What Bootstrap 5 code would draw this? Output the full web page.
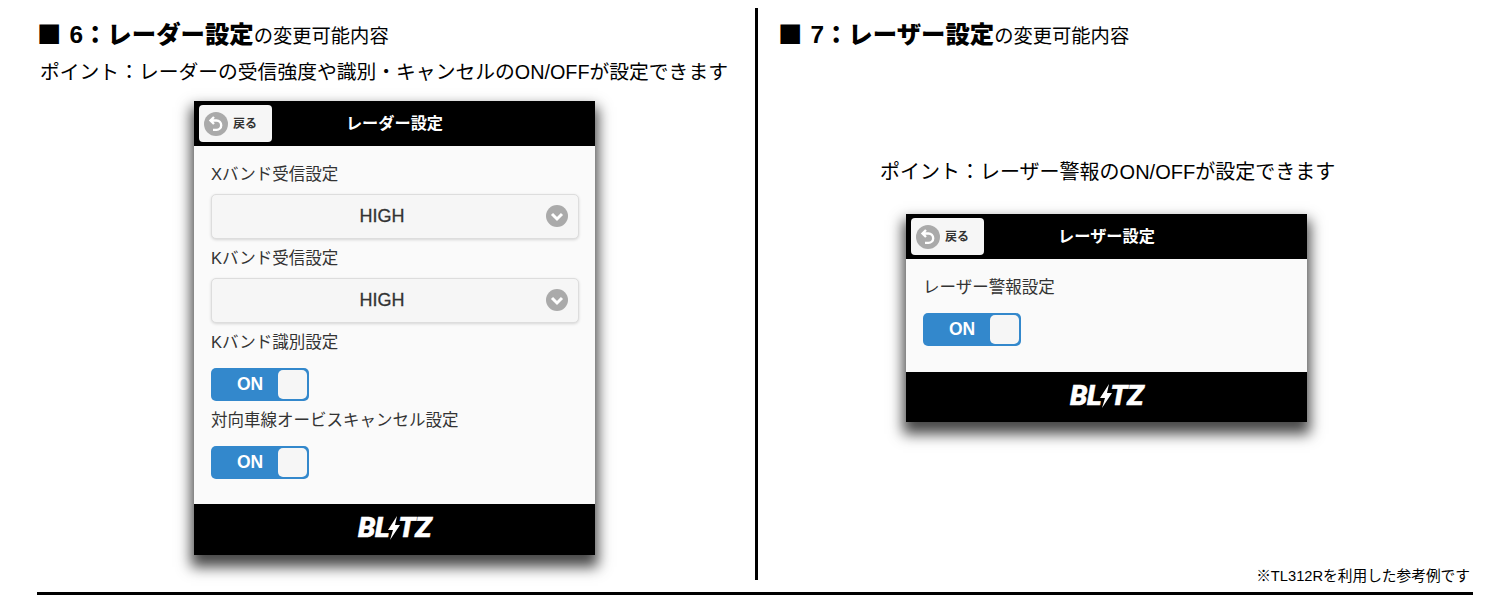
<!DOCTYPE html>
<html lang="ja">
<head>
    <meta charset="UTF-8">
    <title>レーダー設定 / レーザー設定</title>
    <link href="https://cdn.jsdelivr.net/npm/bootstrap@5.3.3/dist/css/bootstrap.min.css" rel="stylesheet">
    <style>
        body {
            background: #fff;
            color: #000;
            font-family: "Liberation Sans", "Noto Sans CJK JP", sans-serif;
            overflow: hidden;
        }
        .sheet { width: 1500px; height: 600px; padding-top: 8px; }
        .split { height: 572px; }
        .pane-left { width: 755px; padding-left: 37px; }
        .pane-right { width: 745px; padding-left: 20px; padding-right: 30px; border-left: 3px solid #000; }
        .sect-title { height: 52px; font-size: 19.3px; line-height: 50px; white-space: nowrap; margin: 0; font-weight: 400; }
        .sect-title b { font-size: 24.4px; font-weight: 900; }
        .sq-mark { font-family: "Noto Sans CJK JP", sans-serif; margin-right: 8px; }
        .point-text { font-size: 19.8px; line-height: 24px; white-space: nowrap; margin: 0; }
        .pane-left .point-text { margin-left: 3px; }
        .pane-right .point-text { margin: 100px 0 0 102px; font-size: 20px; }
        .phone { width: 401px; background: #fafafa; box-shadow: 0 9px 13px 3px rgba(0,0,0,.72); }
        .pane-left .phone { margin: 17px 0 0 157px; }
        .pane-right .phone { margin: 30px 0 0 128px; }
        .phone-head { height: 45px; background: #000; color: #fff; position: relative; font-weight: 700; font-size: 16.2px; }
        .back-btn { position: absolute; left: 5px; top: 4px; width: 73px; height: 37px; background: #f6f6f6; border-radius: 4px; color: #333; font-size: 12px; gap: 5px; padding-left: 5px; }
        .phone-body { padding: 16px 16px 18px 17px; color: #333; }
        .pane-right .phone-body { padding-bottom: 19px; }
        .set-label { font-size: 16.5px; line-height: 24px; }
        .pick { height: 45px; margin: 8px 0 7px; padding-right: 26px; background: #f6f6f6; border: 1px solid #ddd; border-radius: 5px; box-shadow: 0 1px 3px rgba(0,0,0,.15); position: relative; font-size: 18px; font-weight: 500; -webkit-text-stroke: .3px #333; }
        .pick svg { position: absolute; right: 10px; top: 10px; }
        .switcher { width: 98px; height: 33px; margin: 14px 0 7px; background: #3388cc; border-radius: 5px; position: relative; color: #fff; font-weight: 700; font-size: 17.5px; padding-left: 26px; }
        .switcher i { position: absolute; right: 2px; top: 2px; bottom: 2px; width: 29px; background: #f6f6f6; border-radius: 5px; }
        .phone-foot { height: 51px; padding-bottom: 3px; background: #000; color: #fff; font-family: "Roboto", "Liberation Sans", sans-serif; font-style: italic; font-weight: 900; font-size: 28px; letter-spacing: -.5px; line-height: 1; -webkit-text-stroke: .4px #fff; }
        .pane-right .phone-foot { height: 50px; padding-bottom: 2px; }
        .phone-foot svg { margin: 0 -4px 0 -3px; }
        .foot-note { font-size: 14.7px; line-height: 20px; text-align: right; margin: auto 0 -6px; }
        .end-rule { height: 3px; margin: 12px 27px 0 37px; background: #000; }
    </style>
</head>
<body>
    <div class="sheet">
        <div class="split d-flex">

            <!-- 6: radar -->
            <div class="pane-left">
                <h2 class="sect-title"><b><span class="sq-mark">■</span>6：レーダー設定</b>の変更可能内容</h2>
                <p class="point-text">ポイント：レーダーの受信強度や識別・キャンセルのON/OFFが設定できます</p>
                <div class="phone">
                    <div class="phone-head d-flex align-items-center justify-content-center">
                        <div class="back-btn d-flex align-items-center">
                            <svg width="24" height="24" viewBox="0 0 24 24"><circle cx="12" cy="12" r="12" fill="#aaa"/><path d="M10 5 6.5 8.5 10 12M7 8.5h5.5a4.7 4.7 0 0 1 0 9.4H9" fill="none" stroke="#fff" stroke-width="2.4"/></svg>
                            <span>戻る</span>
                        </div>
                        <span>レーダー設定</span>
                    </div>
                    <div class="phone-body">
                        <div class="set-label">Xバンド受信設定</div>
                        <div class="pick d-flex align-items-center justify-content-center">HIGH
                            <svg width="22" height="22" viewBox="0 0 22 22"><circle cx="11" cy="11" r="11" fill="#aaa"/><path d="M6 9l5 5 5-5" fill="none" stroke="#fff" stroke-width="3"/></svg>
                        </div>
                        <div class="set-label">Kバンド受信設定</div>
                        <div class="pick d-flex align-items-center justify-content-center">HIGH
                            <svg width="22" height="22" viewBox="0 0 22 22"><circle cx="11" cy="11" r="11" fill="#aaa"/><path d="M6 9l5 5 5-5" fill="none" stroke="#fff" stroke-width="3"/></svg>
                        </div>
                        <div class="set-label">Kバンド識別設定</div>
                        <div class="switcher d-flex align-items-center">ON<i></i></div>
                        <div class="set-label">対向車線オービスキャンセル設定</div>
                        <div class="switcher d-flex align-items-center">ON<i></i></div>
                    </div>
                    <div class="phone-foot d-flex align-items-center justify-content-center">
                        <span>BL</span><svg width="16" height="24" viewBox="0 0 16 24"><path d="M11 0 2 14h5L4 24 14 9H9z" fill="#fff"/></svg><span>TZ</span>
                    </div>
                </div>
            </div>

            <!-- 7: laser -->
            <div class="pane-right d-flex flex-column">
                <h2 class="sect-title"><b><span class="sq-mark">■</span>7：レーザー設定</b>の変更可能内容</h2>
                <p class="point-text">ポイント：レーザー警報のON/OFFが設定できます</p>
                <div class="phone">
                    <div class="phone-head d-flex align-items-center justify-content-center">
                        <div class="back-btn d-flex align-items-center">
                            <svg width="24" height="24" viewBox="0 0 24 24"><circle cx="12" cy="12" r="12" fill="#aaa"/><path d="M10 5 6.5 8.5 10 12M7 8.5h5.5a4.7 4.7 0 0 1 0 9.4H9" fill="none" stroke="#fff" stroke-width="2.4"/></svg>
                            <span>戻る</span>
                        </div>
                        <span>レーザー設定</span>
                    </div>
                    <div class="phone-body">
                        <div class="set-label">レーザー警報設定</div>
                        <div class="switcher d-flex align-items-center">ON<i></i></div>
                    </div>
                    <div class="phone-foot d-flex align-items-center justify-content-center">
                        <span>BL</span><svg width="16" height="24" viewBox="0 0 16 24"><path d="M11 0 2 14h5L4 24 14 9H9z" fill="#fff"/></svg><span>TZ</span>
                    </div>
                </div>
                <p class="foot-note">※TL312Rを利用した参考例です</p>
            </div>
        </div>
        <div class="end-rule"></div>
    </div>
    <script src="https://cdn.jsdelivr.net/npm/bootstrap@5.3.3/dist/js/bootstrap.bundle.min.js"></script>
</body>
</html>
